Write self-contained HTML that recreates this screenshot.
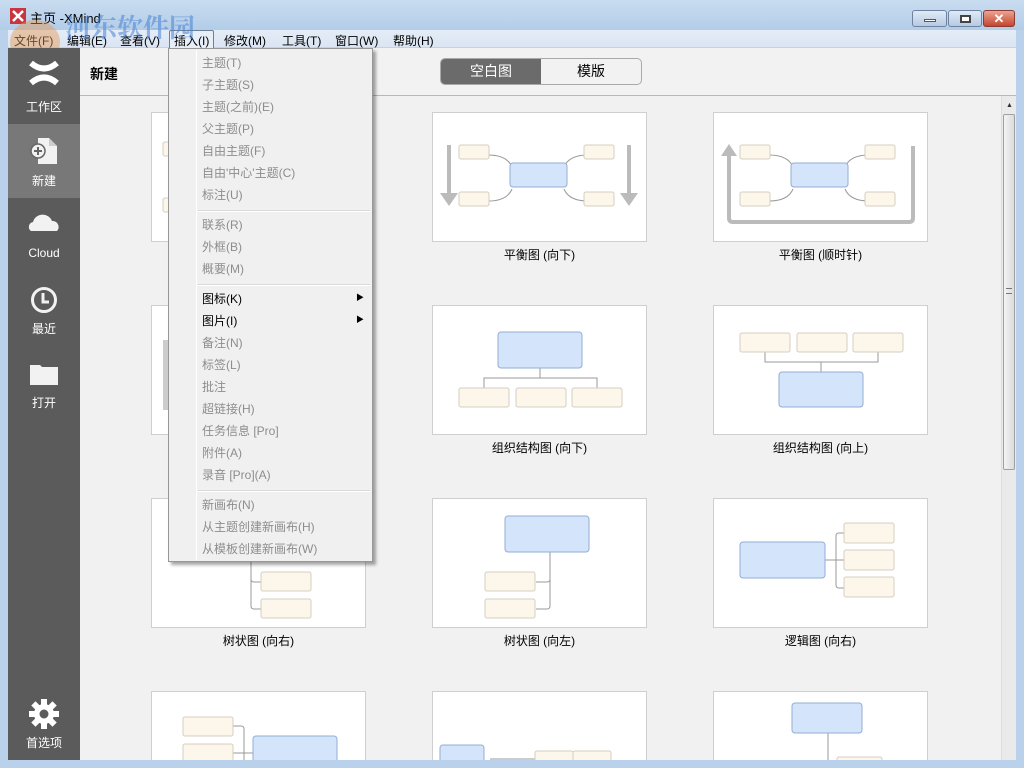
<!DOCTYPE html>
<html><head><meta charset="utf-8"><style>
*{margin:0;padding:0;box-sizing:border-box}
html,body{overflow:hidden}
body{width:1024px;height:768px;position:relative;background:#b9d1ea;font-family:"Liberation Sans","Noto Sans CJK SC",sans-serif;font-size:12px}
.a{position:absolute}
#title{left:0;top:0;width:1024px;height:30px;background:linear-gradient(#c9dcf0,#b3cde8)}
#menubar{left:8px;top:30px;width:1008px;height:18px;background:linear-gradient(#e4ecf7,#dbe5f3);border-bottom:1px solid #c5d2e3}
.mi{position:absolute;top:2px;font-size:12px;color:#000}
#side{left:8px;top:48px;width:72px;height:712px;background:#5b5b5b}
.sl{position:absolute;left:0;width:72px;text-align:center;color:#fff;font-size:12px}
#head{left:80px;top:48px;width:936px;height:48px;background:#f2f2f2;border-bottom:1px solid #b8b8b8}
#content{left:80px;top:96px;width:921px;height:664px;background:#f1f1f1;overflow:hidden}
.lab{position:absolute;width:215px;text-align:center;font-size:12px;color:#000}
#menu{left:168px;top:48px;width:205px;height:514px;background:#f0f0f0;border:1px solid #979797;box-shadow:3px 3px 3px rgba(0,0,0,.35)}
.it{position:absolute;left:33px;font-size:12px;color:#8d8d8d}
.sep{position:absolute;left:29px;width:172px;height:2px;border-top:1px solid #d9d9d9;border-bottom:1px solid #fff}
</style></head><body>
<div id="title" class="a">
 <svg class="a" style="left:10px;top:8px" width="16" height="16"><rect width="16" height="16" fill="#c8343f"/><path d="M3 3L13 13M13 3L3 13" stroke="#fff" stroke-width="2.5"/></svg>
 <div class="a" style="left:30px;top:8px;font-size:13px">主页 -XMind</div>
 <div class="a" style="left:912px;top:10px;width:35px;height:17px;border:1px solid #6d83a0;border-radius:3px;background:linear-gradient(#e0eaf6,#b5cae3)"><div class="a" style="left:11px;top:8px;width:12px;height:3px;background:#fff;border:1px solid #555"></div></div>
 <div class="a" style="left:948px;top:10px;width:34px;height:17px;border:1px solid #6d83a0;border-radius:3px;background:linear-gradient(#e0eaf6,#b5cae3)"><div class="a" style="left:11px;top:4px;width:11px;height:8px;border:2px solid #444;background:#fff"></div></div>
 <div class="a" style="left:983px;top:10px;width:32px;height:17px;border:1px solid #8a3a30;border-radius:3px;background:linear-gradient(#e9a493,#c5452f);color:#fff;font-weight:bold;font-size:13px;text-align:center;line-height:15px">✕</div>
</div>
<div id="menubar" class="a">
 <span class="mi" style="left:6px">文件(F)</span><span class="mi" style="left:59px">编辑(E)</span><span class="mi" style="left:112px">查看(V)</span>
 <span class="mi" style="left:161px;top:0;border:1px solid #6f7f96;border-radius:2px;padding:1px 4px;background:#e8eef7">插入(I)</span>
 <span class="mi" style="left:216px">修改(M)</span><span class="mi" style="left:274px">工具(T)</span><span class="mi" style="left:327px">窗口(W)</span><span class="mi" style="left:385px">帮助(H)</span>
</div>
<div class="a" style="left:65px;top:8px;font-size:26px;font-weight:bold;color:rgba(70,130,210,.55);font-family:'Noto Serif CJK SC',serif">河东软件园</div>
<div class="a" style="left:68px;top:47px;font-size:15px;font-weight:bold;color:rgba(60,160,60,.8);font-family:'Liberation Serif',serif">www.pc0359.cn</div>
<div class="a" style="left:10px;top:20px;width:50px;height:44px;border-radius:50%;background:rgba(230,150,80,.45)"></div>

<div id="side" class="a">
 <svg class="a" style="left:20px;top:12px" width="32" height="26"><path d="M3 3Q16 14 29 3M3 23Q16 12 29 23" stroke="#fff" stroke-width="6" fill="none"/></svg>
 <div class="sl" style="top:50px">工作区</div>
 <div class="a" style="left:0;top:76px;width:72px;height:74px;background:#787878"></div>
 <svg class="a" style="left:21px;top:88px" width="30" height="30"><path d="M9 2H20L28 10V28H9Z" fill="#f2f2f2"/><path d="M20 2V10H28" fill="#ccc"/><circle cx="9" cy="15" r="7" fill="#f2f2f2" stroke="#666" stroke-width="1.5"/><path d="M5 15H13M9 11V19" stroke="#666" stroke-width="2"/></svg>
 <div class="sl" style="top:124px">新建</div>
 <svg class="a" style="left:19px;top:164px" width="34" height="20"><path d="M4 19A5 5 0 0 1 6 10A10 10 0 0 1 25 9A6 6 0 0 1 30 19Z" fill="#f2f2f2"/></svg>
 <div class="sl" style="top:198px">Cloud</div>
 <svg class="a" style="left:22px;top:238px" width="28" height="28"><circle cx="14" cy="14" r="11.5" fill="none" stroke="#f2f2f2" stroke-width="3"/><path d="M13 7V16H19" stroke="#f2f2f2" stroke-width="3" fill="none"/></svg>
 <div class="sl" style="top:272px">最近</div>
 <svg class="a" style="left:21px;top:314px" width="30" height="24"><path d="M1 3H11L13 5H29V23H1Z" fill="#f2f2f2"/></svg>
 <div class="sl" style="top:346px">打开</div>
 <svg class="a" style="left:20px;top:650px" width="32" height="32"><g fill="#fff" transform="translate(16 16)"><circle r="10"/><rect x="-3" y="-15" width="6" height="30"/><rect x="-3" y="-15" width="6" height="30" transform="rotate(45)"/><rect x="-3" y="-15" width="6" height="30" transform="rotate(90)"/><rect x="-3" y="-15" width="6" height="30" transform="rotate(135)"/><circle r="4.5" fill="#5b5b5b"/></g></svg>
 <div class="sl" style="top:686px">首选项</div>
</div>

<div id="head" class="a">
 <div class="a" style="left:10px;top:16px;font-size:14px;font-weight:bold">新建</div>
 <div class="a" style="left:360px;top:10px;width:202px;height:27px;border:1px solid #a9a9a9;border-radius:5px;background:#f2f2f2;overflow:hidden">
  <div class="a" style="left:0;top:0;width:100px;height:27px;background:#6b6b6b;color:#fff;font-size:14px;text-align:center;line-height:24px">空白图</div>
  <div class="a" style="left:100px;top:0;width:100px;height:27px;color:#000;font-size:14px;text-align:center;line-height:24px">模版</div>
 </div>
</div>

<div id="content" class="a">
<svg width="921" height="664" style="position:absolute;left:0;top:0">
<defs>
<style>.b{fill:#d3e4fb;stroke:#93aed3;stroke-width:1}.o{fill:#fdf6ea;stroke:#d5cdc1;stroke-width:1}.l{stroke:#9a9a9a;fill:none;stroke-width:1}.ar{fill:#bbb}</style>
</defs>
<g fill="#fff" stroke="#cfcfcf">
<rect x="71.5" y="16.5" width="214" height="129"/><rect x="352.5" y="16.5" width="214" height="129"/><rect x="633.5" y="16.5" width="214" height="129"/>
<rect x="71.5" y="209.5" width="214" height="129"/><rect x="352.5" y="209.5" width="214" height="129"/><rect x="633.5" y="209.5" width="214" height="129"/>
<rect x="71.5" y="402.5" width="214" height="129"/><rect x="352.5" y="402.5" width="214" height="129"/><rect x="633.5" y="402.5" width="214" height="129"/>
<rect x="71.5" y="595.5" width="214" height="129"/><rect x="352.5" y="595.5" width="214" height="129"/><rect x="633.5" y="595.5" width="214" height="129"/>
</g>
<rect class="o" x="83" y="46" width="20" height="14" rx="2"/><rect class="o" x="83" y="102" width="20" height="14" rx="2"/>
<g transform="translate(352,16)">
<rect class="ar" x="15" y="33" width="4" height="50"/><path class="ar" d="M8 81H26L17 94Z"/>
<rect class="ar" x="195" y="33" width="4" height="50"/><path class="ar" d="M188 81H206L197 94Z"/>
<path class="l" d="M56 43Q75 43 80 55M56 89Q75 89 80 77M156 43Q137 43 132 55M156 89Q137 89 132 77"/>
<rect class="o" x="27" y="33" width="30" height="14" rx="2"/><rect class="o" x="27" y="80" width="30" height="14" rx="2"/>
<rect class="o" x="152" y="33" width="30" height="14" rx="2"/><rect class="o" x="152" y="80" width="30" height="14" rx="2"/>
<rect class="b" x="78" y="51" width="57" height="24" rx="3"/>
</g>
<g transform="translate(633,16)">
<path d="M16 42V106Q16 110 20 110H196Q200 110 200 106V34" stroke="#bbb" stroke-width="4" fill="none"/><path class="ar" d="M8 44H24L16 32Z"/>
<path class="l" d="M56 43Q75 43 80 55M56 89Q75 89 80 77M156 43Q137 43 132 55M156 89Q137 89 132 77"/>
<rect class="o" x="27" y="33" width="30" height="14" rx="2"/><rect class="o" x="27" y="80" width="30" height="14" rx="2"/>
<rect class="o" x="152" y="33" width="30" height="14" rx="2"/><rect class="o" x="152" y="80" width="30" height="14" rx="2"/>
<rect class="b" x="78" y="51" width="57" height="24" rx="3"/>
</g>
<rect x="83" y="244" width="5" height="70" fill="#ccc"/>
<g transform="translate(352,209)">
<path class="l" d="M108 63V73M52 83V73H165V83"/>
<rect class="b" x="66" y="27" width="84" height="36" rx="3"/>
<rect class="o" x="27" y="83" width="50" height="19" rx="2"/><rect class="o" x="84" y="83" width="50" height="19" rx="2"/><rect class="o" x="140" y="83" width="50" height="19" rx="2"/>
</g>
<g transform="translate(633,209)">
<path class="l" d="M108 67V57M52 47V57H165V47"/>
<rect class="o" x="27" y="28" width="50" height="19" rx="2"/><rect class="o" x="84" y="28" width="50" height="19" rx="2"/><rect class="o" x="140" y="28" width="50" height="19" rx="2"/>
<rect class="b" x="66" y="67" width="84" height="35" rx="3"/>
</g>
<g transform="translate(71,402)">
<path class="l" d="M100 60V108Q100 111 103 111H110M100 81Q100 84 103 84H110"/>
<rect class="o" x="110" y="74" width="50" height="19" rx="2"/><rect class="o" x="110" y="101" width="50" height="19" rx="2"/>
</g>
<g transform="translate(352,402)">
<path class="l" d="M118 54V108Q118 111 115 111H104M118 81Q118 84 115 84H104"/>
<rect class="b" x="73" y="18" width="84" height="36" rx="3"/>
<rect class="o" x="53" y="74" width="50" height="19" rx="2"/><rect class="o" x="53" y="101" width="50" height="19" rx="2"/>
</g>
<g transform="translate(633,402)">
<path class="l" d="M112 62H126M126 35Q123 35 123 38V87Q123 90 126 90H131M126 35H131M123 62H131"/>
<rect class="b" x="27" y="44" width="85" height="36" rx="3"/>
<rect class="o" x="131" y="25" width="50" height="20" rx="2"/><rect class="o" x="131" y="52" width="50" height="20" rx="2"/><rect class="o" x="131" y="79" width="50" height="20" rx="2"/>
</g>
<g transform="translate(71,595)">
<path class="l" d="M82 35H90Q93 35 93 38V70M82 62H102"/>
<rect class="o" x="32" y="26" width="50" height="19" rx="2"/><rect class="o" x="32" y="53" width="50" height="19" rx="2"/>
<rect class="b" x="102" y="45" width="84" height="40" rx="3"/>
</g>
<g transform="translate(352,595)">
<path class="l" d="M58 68H140"/>
<rect class="b" x="8" y="54" width="44" height="30" rx="3"/>
<rect class="o" x="103" y="60" width="38" height="18" rx="2"/><rect class="o" x="141" y="60" width="38" height="18" rx="2"/>
</g>
<g transform="translate(633,595)">
<path class="l" d="M115 40V80"/>
<rect class="b" x="79" y="12" width="70" height="30" rx="3"/>
<rect class="o" x="124" y="66" width="45" height="18" rx="2"/>
</g>
</svg>
<div class="lab" style="left:352px;top:150px">平衡图 (向下)</div>
<div class="lab" style="left:633px;top:150px">平衡图 (顺时针)</div>
<div class="lab" style="left:352px;top:343px">组织结构图 (向下)</div>
<div class="lab" style="left:633px;top:343px">组织结构图 (向上)</div>
<div class="lab" style="left:71px;top:536px">树状图 (向右)</div>
<div class="lab" style="left:352px;top:536px">树状图 (向左)</div>
<div class="lab" style="left:633px;top:536px">逻辑图 (向右)</div>
</div>

<div class="a" style="left:1001px;top:96px;width:15px;height:664px;background:#eaeaea;border-left:1px solid #ddd">
 <div class="a" style="left:4px;top:6px;font-size:7px;color:#333">▲</div>
 <div class="a" style="left:1px;top:18px;width:12px;height:356px;border:1px solid #a0a0a0;border-radius:2px;background:linear-gradient(90deg,#f3f3f3,#dcdcdc)"></div>
 <div class="a" style="left:4px;top:192px;width:6px;height:6px;border-top:1px solid #777;border-bottom:1px solid #777"></div>
</div>

<div id="menu" class="a">
 <div class="a" style="left:27px;top:1px;width:1px;height:510px;background:#e2e2e2;border-right:1px solid #fff"></div>
 <div class="it" style="top:5px">主题(T)</div>
 <div class="it" style="top:27px">子主题(S)</div>
 <div class="it" style="top:49px">主题(之前)(E)</div>
 <div class="it" style="top:71px">父主题(P)</div>
 <div class="it" style="top:93px">自由主题(F)</div>
 <div class="it" style="top:115px">自由'中心'主题(C)</div>
 <div class="it" style="top:137px">标注(U)</div>
 <div class="sep" style="top:161px"></div>
 <div class="it" style="top:167px">联系(R)</div>
 <div class="it" style="top:189px">外框(B)</div>
 <div class="it" style="top:211px">概要(M)</div>
 <div class="sep" style="top:235px"></div>
 <div class="it" style="top:241px;color:#000">图标(K)</div><div class="a" style="left:187px;top:243px;font-size:8px">▶</div>
 <div class="it" style="top:263px;color:#000">图片(I)</div><div class="a" style="left:187px;top:265px;font-size:8px">▶</div>
 <div class="it" style="top:285px">备注(N)</div>
 <div class="it" style="top:307px">标签(L)</div>
 <div class="it" style="top:329px">批注</div>
 <div class="it" style="top:351px">超链接(H)</div>
 <div class="it" style="top:373px">任务信息 [Pro]</div>
 <div class="it" style="top:395px">附件(A)</div>
 <div class="it" style="top:417px">录音 [Pro](A)</div>
 <div class="sep" style="top:441px"></div>
 <div class="it" style="top:447px">新画布(N)</div>
 <div class="it" style="top:469px">从主题创建新画布(H)</div>
 <div class="it" style="top:491px">从模板创建新画布(W)</div>
</div>
</body></html>
